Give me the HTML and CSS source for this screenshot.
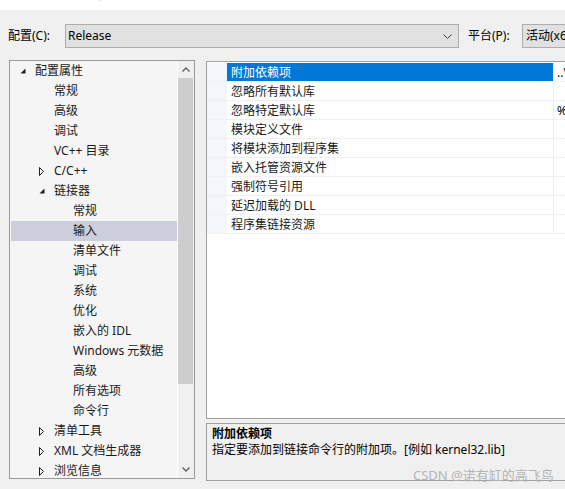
FILE: index.html
```html
<!DOCTYPE html>
<html lang="zh-CN">
<head>
<meta charset="utf-8">
<title>属性页</title>
<link rel="stylesheet" href="styles.css">
</head>
<body>
<div class="titlebar"><span class="title-text">属性页</span></div>

<div class="config-row">
  <span class="label label-config">配置(C):</span>
  <div class="combo combo-config">
    <span class="combo-text">Release</span>
    <svg class="chev" width="9" height="6" viewBox="0 0 9 6"><polyline points="0.5,0.5 4.5,4.5 8.5,0.5" fill="none" stroke="#3c3c3c" stroke-width="1"/></svg>
  </div>
  <span class="label label-platform">平台(P):</span>
  <div class="combo combo-platform">
    <span class="combo-text">活动(x64)</span>
  </div>
</div>

<div class="main">
  <div class="tree">
    <div class="tree-list">
      <div class="node l0"><span class="tw"><svg width="6" height="6" viewBox="0 0 6 6"><polygon points="5.5,0.5 5.5,5.5 0.5,5.5" fill="#1e1e1e"/></svg></span><span>配置属性</span></div>
      <div class="node l1"><span class="tw"></span><span>常规</span></div>
      <div class="node l1"><span class="tw"></span><span>高级</span></div>
      <div class="node l1"><span class="tw"></span><span>调试</span></div>
      <div class="node l1"><span class="tw"></span><span>VC++ 目录</span></div>
      <div class="node l1"><span class="tw"><svg width="6" height="9" viewBox="0 0 6 9"><polygon points="0.5,0.5 4.5,4.5 0.5,8.5" fill="none" stroke="#1e1e1e" stroke-width="1"/></svg></span><span>C/C++</span></div>
      <div class="node l1"><span class="tw"><svg width="6" height="6" viewBox="0 0 6 6"><polygon points="5.5,0.5 5.5,5.5 0.5,5.5" fill="#1e1e1e"/></svg></span><span>链接器</span></div>
      <div class="node l2"><span class="tw"></span><span>常规</span></div>
      <div class="node l2 selected"><span class="tw"></span><span>输入</span></div>
      <div class="node l2"><span class="tw"></span><span>清单文件</span></div>
      <div class="node l2"><span class="tw"></span><span>调试</span></div>
      <div class="node l2"><span class="tw"></span><span>系统</span></div>
      <div class="node l2"><span class="tw"></span><span>优化</span></div>
      <div class="node l2"><span class="tw"></span><span>嵌入的 IDL</span></div>
      <div class="node l2"><span class="tw"></span><span>Windows 元数据</span></div>
      <div class="node l2"><span class="tw"></span><span>高级</span></div>
      <div class="node l2"><span class="tw"></span><span>所有选项</span></div>
      <div class="node l2"><span class="tw"></span><span>命令行</span></div>
      <div class="node l1"><span class="tw"><svg width="6" height="9" viewBox="0 0 6 9"><polygon points="0.5,0.5 4.5,4.5 0.5,8.5" fill="none" stroke="#1e1e1e" stroke-width="1"/></svg></span><span>清单工具</span></div>
      <div class="node l1"><span class="tw"><svg width="6" height="9" viewBox="0 0 6 9"><polygon points="0.5,0.5 4.5,4.5 0.5,8.5" fill="none" stroke="#1e1e1e" stroke-width="1"/></svg></span><span>XML 文档生成器</span></div>
      <div class="node l1"><span class="tw"><svg width="6" height="9" viewBox="0 0 6 9"><polygon points="0.5,0.5 4.5,4.5 0.5,8.5" fill="none" stroke="#1e1e1e" stroke-width="1"/></svg></span><span>浏览信息</span></div>
    </div>
    <div class="vscroll">
      <div class="sb-arrow"><svg width="8" height="5" viewBox="0 0 8 5"><polyline points="0.5,4.5 4,1 7.5,4.5" fill="none" stroke="#606060" stroke-width="1.4"/></svg></div>
      <div class="sb-track"><div class="sb-thumb"></div></div>
      <div class="sb-arrow"><svg width="8" height="5" viewBox="0 0 8 5"><polyline points="0.5,0.5 4,4 7.5,0.5" fill="none" stroke="#606060" stroke-width="1.4"/></svg></div>
    </div>
  </div>

  <div class="right">
    <div class="props">
      <div class="prow sel"><div class="gut"></div><div class="pname">附加依赖项</div><div class="pval">..\..\lib\x64</div></div>
      <div class="prow"><div class="gut"></div><div class="pname">忽略所有默认库</div><div class="pval"></div></div>
      <div class="prow"><div class="gut"></div><div class="pname">忽略特定默认库</div><div class="pval">%(IgnoreSpecificDefaultLibraries)</div></div>
      <div class="prow"><div class="gut"></div><div class="pname">模块定义文件</div><div class="pval"></div></div>
      <div class="prow"><div class="gut"></div><div class="pname">将模块添加到程序集</div><div class="pval"></div></div>
      <div class="prow"><div class="gut"></div><div class="pname">嵌入托管资源文件</div><div class="pval"></div></div>
      <div class="prow"><div class="gut"></div><div class="pname">强制符号引用</div><div class="pval"></div></div>
      <div class="prow"><div class="gut"></div><div class="pname">延迟加载的 DLL</div><div class="pval"></div></div>
      <div class="prow"><div class="gut"></div><div class="pname">程序集链接资源</div><div class="pval"></div></div>
    </div>
    <div class="desc">
      <div class="desc-title">附加依赖项</div>
      <div class="desc-text">指定要添加到链接命令行的附加项。[例如 kernel32.lib]</div>
      <div class="watermark">CSDN @诺有缸的高飞鸟</div>
    </div>
  </div>
</div>
</body>
</html>
```

FILE: styles.css
```css
html, body {
  margin: 0;
  padding: 0;
}
body {
  width: 565px;
  height: 489px;
  overflow: hidden;
  background: #f0f0f0;
  font-family: "Noto Sans", "Noto Sans CJK SC", sans-serif;
  font-size: 12px;
  color: #000;
}

.titlebar {
  height: 10px;
  background: #fff;
  overflow: hidden;
}
.title-text {
  display: block;
  line-height: 14px;
  margin-top: -12px;
  padding-left: 85px;
  color: #000;
}

.config-row {
  display: flex;
  align-items: center;
  margin-top: 14px;
  height: 24px;
  padding-left: 8px;
  white-space: nowrap;
}
.label {
  flex: none;
  line-height: 24px;
}
.label-config {
  width: 57px;
}
.label-platform {
  width: 54px;
  margin-left: 9px;
}
.combo {
  flex: none;
  box-sizing: border-box;
  height: 24px;
  border: 1px solid #adadad;
  background: #e1e1e1;
  display: flex;
  align-items: center;
  padding-left: 2px;
}
.combo-config {
  width: 394px;
  padding-right: 6px;
}
.combo-platform {
  width: 110px;
  padding-left: 3px;
}
.combo-text {
  flex: 1;
  line-height: 22px;
}
.chev {
  flex: none;
  margin-top: 1px;
}

.main {
  display: flex;
  align-items: flex-start;
  margin-top: 12px;
  padding-left: 9px;
  gap: 11px;
}

.tree {
  flex: none;
  box-sizing: border-box;
  width: 186px;
  height: 419px;
  border: 1px solid #999;
  background: #f5f5f5;
  display: flex;
  overflow: hidden;
}
.tree-list {
  width: 166px;
  padding-left: 1px;
  overflow: hidden;
}
.node {
  display: flex;
  align-items: center;
  height: 20px;
  line-height: 20px;
  white-space: nowrap;
  color: #1a1a1a;
}
.node.l0 { padding-left: 10px; }
.node.l1 { padding-left: 29px; }
.node.l2 { padding-left: 48px; }
.node.selected {
  background: #cccedb;
}
.tw {
  flex: none;
  width: 14px;
  display: flex;
  align-items: center;
}
.tw svg {
  margin-left: -1px;
  display: block;
}

.vscroll {
  flex: none;
  width: 17px;
  display: flex;
  flex-direction: column;
  background: #f0f0f0;
  border-left: 1px solid #fff;
  box-sizing: border-box;
}
.sb-arrow {
  height: 17px;
  display: flex;
  align-items: center;
  justify-content: center;
}
.sb-arrow svg { display: block; }
.sb-track {
  flex: 1;
}
.sb-thumb {
  width: 15px;
  height: 306px;
  background: #cdcdcd;
}

.right {
  flex: none;
  width: 420px;
  display: flex;
  flex-direction: column;
  gap: 4px;
  margin-top: 1px;
}
.props {
  box-sizing: border-box;
  height: 358px;
  border: 1px solid #a0a0a0;
  background: #fff;
  padding-top: 1px;
}
.prow {
  display: flex;
  height: 19px;
  box-sizing: border-box;
  border-bottom: 1px solid #f0f0f0;
  line-height: 19px;
  white-space: nowrap;
}
.gut {
  flex: none;
  width: 20px;
  background: #f3f6fb;
}
.pname {
  flex: none;
  width: 322px;
  padding-left: 4px;
  color: #1a1a1a;
  overflow: hidden;
}
.prow.sel .pname {
  background: #0078d7;
  color: #fff;
}
.pval {
  flex: 1;
  border-left: 1px solid #ececec;
  padding-left: 3px;
  overflow: hidden;
}

.desc {
  position: relative;
  box-sizing: border-box;
  height: 58px;
  border: 1px solid #a0a0a0;
  background: #f0f0f0;
  padding: 2px 0 0 5px;
  white-space: nowrap;
}
.desc-title {
  font-weight: bold;
  line-height: 16px;
}
.desc-text {
  line-height: 16px;
}
.watermark {
  position: absolute;
  left: 206px;
  top: 43px;
  font-size: 13px;
  line-height: 16px;
  color: #b4b4b4;
}
```
